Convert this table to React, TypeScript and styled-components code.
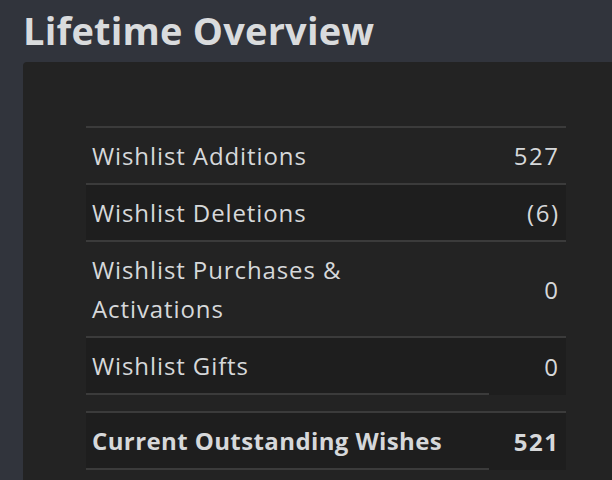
import React from "react";
import styled, { createGlobalStyle } from "styled-components";

const GlobalStyle = createGlobalStyle`
  html, body {
    margin: 0;
    padding: 0;
    background: #31343c;
    overflow: hidden;
  }
  body {
    font-family: "Open Sans", "Noto Sans", sans-serif;
    color: #d6d8da;
  }
`;

const Page = styled.div`
  display: flex;
  flex-direction: column;
  padding-left: 23px;
  height: 480px;
  box-sizing: border-box;
`;

const Title = styled.h1`
  margin: 11px 0 13px;
  font-size: 38px;
  line-height: 38px;
  font-weight: 700;
  letter-spacing: 0.2px;
  color: #d9dbdd;
`;

const Panel = styled.div`
  flex: 1;
  background: #232323;
  border-radius: 4px 0 0 0;
  padding: 64px 0 0 63px;
`;

const Table = styled.div`
  width: 480px;
  display: flex;
  flex-direction: column;
`;

const Row = styled.div<{ $alt?: boolean }>`
  display: flex;
  align-items: stretch;
  border-top: 2px solid #3b3b3b;
  background: ${(p) => (p.$alt ? "#1e1e1e" : "transparent")};
`;

const Label = styled.div<{ $rule?: boolean; $bold?: boolean }>`
  flex: 0 0 403px;
  box-sizing: border-box;
  padding: 8px 6px;
  font-size: 24px;
  line-height: 39px;
  font-weight: ${(p) => (p.$bold ? 700 : 400)};
  letter-spacing: ${(p) => (p.$bold ? "0.4px" : "0.9px")};
  border-bottom: ${(p) => (p.$rule ? "2px solid #3b3b3b" : "none")};
`;

const Value = styled.div<{ $bold?: boolean }>`
  flex: 1;
  display: flex;
  align-items: center;
  justify-content: flex-end;
  padding-right: 6.5px;
  font-size: 24px;
  letter-spacing: 1.5px;
  font-weight: ${(p) => (p.$bold ? 700 : 400)};
`;

const Spacer = styled.div`
  height: 16px;
`;

export default function App() {
  return (
    <>
      <GlobalStyle />
      <Page>
        <Title>Lifetime Overview</Title>
        <Panel>
          <Table>
            <Row>
              <Label>Wishlist Additions</Label>
              <Value>527</Value>
            </Row>
            <Row $alt>
              <Label>Wishlist Deletions</Label>
              <Value>(6)</Value>
            </Row>
            <Row>
              <Label>
                Wishlist Purchases &amp;
                <br />
                Activations
              </Label>
              <Value>0</Value>
            </Row>
            <Row $alt>
              <Label $rule>Wishlist Gifts</Label>
              <Value>0</Value>
            </Row>
            <Spacer />
            <Row $alt>
              <Label $rule $bold>
                Current Outstanding Wishes
              </Label>
              <Value $bold>521</Value>
            </Row>
          </Table>
        </Panel>
      </Page>
    </>
  );
}
